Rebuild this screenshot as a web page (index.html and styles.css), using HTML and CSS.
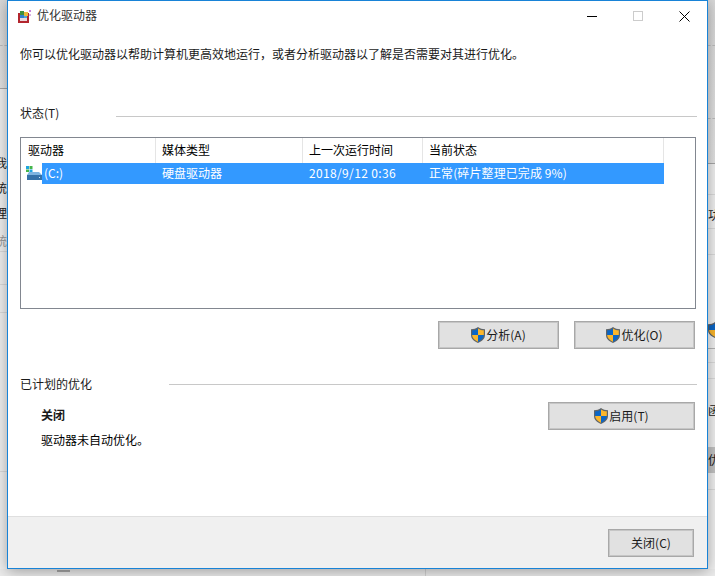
FILE: index.html
```html
<!DOCTYPE html>
<html lang="zh-CN">
<head>
    <meta charset="UTF-8">
    <title>优化驱动器</title>
    <link rel="stylesheet" href="styles.css">
</head>
<body>
    <svg class="defs" width="0" height="0">
        <symbol id="shield" viewBox="0 0 14 16">
            <path d="M7 0 C5 1.600 2.800 2.200 0 2.200 V8 C0 11.800 3 14.400 7 16 C11 14.400 14 11.800 14 8 V2.200 C11.200 2.200 9 1.600 7 0Z" fill="#5f6468"/>
            <path d="M7 1.400 C5.200 2.700 3.300 3.200 1.200 3.300 V8 H7Z" fill="#0b66c6"/>
            <path d="M7 1.400 C8.800 2.700 10.700 3.200 12.800 3.300 V8 H7Z" fill="#fbb62b"/>
            <path d="M1.200 8 C1.200 11 3.800 13.300 7 14.700 V8Z" fill="#fbb62b"/>
            <path d="M12.800 8 C12.800 11 10.200 13.300 7 14.700 V8Z" fill="#0b66c6"/>
        </symbol>
    </svg>

    <div class="desktop">
        <div class="strip strip-left">
            <div class="strip-head"><div class="dash"></div></div>
            <div class="strip-text first">我</div>
            <div class="strip-text">统</div>
            <div class="strip-text">理</div>
            <div class="strip-text muted">统</div>
            <div class="strip-line"></div>
            <div class="strip-line gap-26"></div>
            <div class="strip-line gap-28"></div>
            <div class="strip-line gap-160"></div>
        </div>

        <div class="window">
            <div class="titlebar">
                <svg class="app-icon" width="15" height="15" viewBox="0 0 15 15">
                    <rect x="1" y="4" width="11" height="10" fill="#b3262e"/>
                    <rect x="3" y="2" width="4" height="4" fill="#3f8f3c"/>
                    <rect x="7" y="3" width="4" height="4" fill="#e8b93a"/>
                    <rect x="3" y="6" width="4" height="3" fill="#2f7fd0"/>
                    <rect x="7" y="7" width="3" height="3" fill="#49a7d8"/>
                    <rect x="3" y="9" width="7" height="3" fill="#e9d8dc"/>
                    <rect x="12" y="1" width="2" height="2" fill="#c783d8"/>
                    <rect x="12" y="5" width="2" height="2" fill="#d9b4e4"/>
                </svg>
                <span class="title">优化驱动器</span>
                <div class="controls">
                    <div class="control">
                        <svg width="10" height="10" viewBox="0 0 10 10"><path d="M0 5.500H10" stroke="#000"/></svg>
                    </div>
                    <div class="control">
                        <svg width="10" height="10" viewBox="0 0 10 10"><rect x=".5" y=".5" width="9" height="9" fill="none" stroke="#ccc"/></svg>
                    </div>
                    <div class="control">
                        <svg width="11" height="11" viewBox="0 0 11 11"><path d="M.5 .5L10.500 10.500M10.500 .5L.5 10.500" stroke="#000" fill="none"/></svg>
                    </div>
                </div>
            </div>

            <div class="content">
                <p class="desc">你可以优化驱动器以帮助计算机更高效地运行，或者分析驱动器以了解是否需要对其进行优化。</p>

                <div class="section-head status-head">
                    <span class="section-title">状态(T)</span>
                    <div class="rule"></div>
                </div>

                <div class="list">
                    <div class="list-head">
                        <div class="col col-1">驱动器</div>
                        <div class="col col-2">媒体类型</div>
                        <div class="col col-3">上一次运行时间</div>
                        <div class="col col-4">当前状态</div>
                    </div>
                    <div class="list-row">
                        <svg class="drive-icon" width="16" height="14" viewBox="0 0 16 14">
                            <rect x="0" y="0" width="3" height="3" fill="#1fa5e0"/>
                            <rect x="3.500" y="0" width="3" height="3" fill="#45b649"/>
                            <rect x="0" y="3.500" width="3" height="2.500" fill="#45b649"/>
                            <rect x="3.500" y="3.500" width="3" height="2.500" fill="#1fa5e0"/>
                            <path d="M3 6 H13 L16 9 H1 Z" fill="#7db4e0"/>
                            <rect x="1" y="9" width="15" height="5" fill="#3572a8"/>
                            <rect x="13" y="11" width="1" height="1" fill="#cfe6f7"/>
                        </svg>
                        <div class="row-selected">
                            <div class="cell cell-1">(C:)</div>
                            <div class="cell cell-2">硬盘驱动器</div>
                            <div class="cell cell-3">2018/9/12 0:36</div>
                            <div class="cell cell-4">正常(碎片整理已完成 9%)</div>
                        </div>
                    </div>
                </div>

                <div class="actions">
                    <button class="btn btn-wide"><svg class="shield" width="14" height="16"><use href="#shield"/></svg>分析(A)</button>
                    <button class="btn btn-wide"><svg class="shield" width="14" height="16"><use href="#shield"/></svg>优化(O)</button>
                </div>

                <div class="section-head schedule-head">
                    <span class="section-title">已计划的优化</span>
                    <div class="rule"></div>
                </div>

                <div class="schedule">
                    <div class="schedule-info">
                        <div class="schedule-state">关闭</div>
                        <div class="schedule-note">驱动器未自动优化。</div>
                    </div>
                    <button class="btn btn-enable"><svg class="shield" width="14" height="16"><use href="#shield"/></svg>启用(T)</button>
                </div>
            </div>

            <div class="footer">
                <button class="btn btn-close">关闭(C)</button>
            </div>
        </div>

        <div class="strip strip-right">
            <div class="strip-head strip-head-tall">
                <div class="dash"></div>
                <div class="dash dash-low"></div>
            </div>
            <div class="strip-line r-line-1"></div>
            <div class="strip-text r-first">功</div>
            <div class="strip-line r-line-2"></div>
            <div class="strip-line r-line-3"></div>
            <svg class="r-shield" width="14" height="16"><use href="#shield"/></svg>
            <div class="strip-line r-line-4"></div>
            <div class="strip-line r-line-5"></div>
            <div class="strip-line r-line-6"></div>
            <div class="strip-text r-han">函</div>
            <div class="strip-text r-dark">优</div>
            <div class="strip-line r-line-7"></div>
        </div>

        <div class="strip-bottom">
            <div class="stub"></div>
            <div class="vline"></div>
        </div>
    </div>
</body>
</html>
```

FILE: styles.css
```css
* {
    margin: 0;
    padding: 0;
    box-sizing: border-box;
}

html, body {
    width: 715px;
    height: 576px;
    overflow: hidden;
}

body {
    font-family: "Noto Sans CJK SC", "Liberation Sans", sans-serif;
    font-size: 12px;
    line-height: 16px;
    color: #1a1a1a;
    background-color: #f0f0f0;
}

.defs {
    display: block;
    height: 0;
}

.desktop {
    display: grid;
    grid-template-columns: 7px 701px 7px;
    grid-template-rows: 569px 7px;
    width: 715px;
    height: 576px;
}

/* the other window showing around the dialog */
.strip {
    overflow: hidden;
    background-color: #f1f1f1;
}

.strip-head {
    height: 89px;
    padding-top: 45px;
    background: linear-gradient(#d9d9d9, #e4e4e4);
    border-bottom: 1px solid #a8a8a8;
}

.strip-head-tall {
    height: 164px;
}

.dash {
    border-top: 1px dashed #bdbdbd;
}

.dash-low {
    margin-top: 72px;
}

.strip-text {
    height: 16px;
    margin-top: 9px;
    white-space: nowrap;
    display: flex;
    color: #222;
}

.strip-left .strip-text {
    justify-content: flex-end;
}

.strip-left .first {
    margin-top: 66px;
}

.strip-left .muted {
    margin-top: 12px;
    color: #999;
}

.strip-line {
    height: 1px;
    background-color: #dcdcdc;
}

.strip-left .strip-line {
    margin-top: 2px;
}

.strip-left .gap-26 {
    margin-top: 32px;
}

.strip-left .gap-28 {
    margin-top: 27px;
}

.strip-left .gap-160 {
    margin-top: 158px;
}

.r-line-1 {
    margin-top: 30px;
}

.strip-right .r-first {
    margin-top: 12px;
}

.r-line-2 {
    margin-top: 5px;
}

.r-line-3 {
    margin-top: 25px;
}

.r-shield {
    display: block;
    margin-top: 67px;
}

.r-line-4 {
    margin-top: 10px;
    background-color: #b5b5b5;
}

.r-line-5 {
    margin-top: 13px;
}

.r-line-6 {
    margin-top: 15px;
}

.strip-right .r-han {
    margin-top: 23px;
}

.strip-right .r-dark {
    height: 26px;
    margin-top: 29px;
    padding-top: 5px;
    background-color: #c4c4c4;
}

.r-line-7 {
    margin-top: 16px;
}

.strip-bottom {
    grid-column: 1 / 4;
    display: flex;
    padding-left: 57px;
    background-color: #ececec;
}

.stub {
    width: 13px;
    height: 2px;
    margin-top: 1px;
    background-color: #a6a6a6;
}

.vline {
    width: 1px;
    margin-left: 355px;
    background-color: #d2d2d2;
}

/* dialog */
.window {
    position: relative;
    display: flex;
    flex-direction: column;
    background-color: #fff;
    border: 1px solid #1883d7;
    box-shadow: 0 2px 14px rgba(0, 0, 0, 0.35);
}

.titlebar {
    display: flex;
    align-items: center;
    height: 30px;
    padding-left: 9px;
}

.app-icon {
    display: block;
    flex: none;
}

.title {
    margin-left: 5px;
    padding-bottom: 2px;
    color: #333;
}

.controls {
    display: flex;
    margin-left: auto;
}

.control {
    display: flex;
    align-items: center;
    justify-content: center;
    width: 46px;
    height: 30px;
}

.content {
    padding: 16px 10px 0 12px;
}

.desc {
    height: 16px;
    line-height: 14px;
}

.section-head {
    display: flex;
    align-items: flex-start;
}

.status-head {
    margin-top: 43px;
}

.status-head .section-title {
    width: 96px;
    height: 16px;
    line-height: 14px;
}

.status-head .rule {
    margin-top: 10px;
}

.schedule-head {
    margin-top: 27px;
}

.schedule-head .section-title {
    width: 149px;
}

.schedule-head .rule {
    margin-top: 8px;
}

.section-title {
    flex: none;
}

.rule {
    flex: 1;
    height: 1px;
    background-color: #c8c8c8;
}

.list {
    width: 676px;
    height: 172px;
    margin-top: 15px;
    border: 1px solid #828790;
}

.list-head {
    display: flex;
    height: 25px;
    line-height: 23px;
    color: #000;
}

.col {
    padding-left: 6px;
    border-right: 1px solid #e5e5e5;
}

.col-1 {
    width: 135px;
    padding-left: 7px;
}

.col-2 {
    width: 147px;
}

.col-3 {
    width: 120px;
}

.col-4 {
    width: 241px;
}

.list-row {
    display: flex;
    height: 21px;
    line-height: 19px;
}

.drive-icon {
    display: block;
    flex: none;
    width: 16px;
    height: 14px;
    margin: 3px 0 0 5px;
}

.row-selected {
    display: flex;
    height: 21px;
    background-color: #3399ff;
    color: #fff;
}

.cell-1 {
    width: 114px;
    padding-left: 2px;
}

.cell-2 {
    width: 147px;
    padding-left: 6px;
}

.cell-3 {
    width: 120px;
    padding-left: 6px;
    letter-spacing: 0.35px;
}

.cell-4 {
    width: 241px;
    padding-left: 6px;
    letter-spacing: 0.1px;
}

.actions {
    display: flex;
    justify-content: flex-end;
    gap: 15px;
    margin-top: 12px;
    padding-right: 2px;
}

.btn {
    display: flex;
    align-items: center;
    justify-content: center;
    gap: 1px;
    height: 28px;
    font: inherit;
    color: #1a1a1a;
    background-color: #e1e1e1;
    border: 1px solid #a8a8a8;
    box-shadow: inset 0 0 0 1px #c6c6c6;
}

.btn-wide {
    width: 121px;
}

.btn-enable {
    width: 147px;
}

.btn-close {
    width: 86px;
}

.shield {
    display: block;
    flex: none;
}

.schedule {
    display: flex;
    justify-content: space-between;
    align-items: flex-start;
    margin-top: 10px;
    padding: 0 2px 0 21px;
}

.schedule-info {
    padding-top: 5px;
}

.schedule-state {
    font-weight: 700;
}

.schedule-note {
    margin-top: 9px;
    color: #000;
}

.footer {
    display: flex;
    justify-content: flex-end;
    height: 52px;
    margin-top: auto;
    padding: 12px 13px 0 0;
    background-color: #f0f0f0;
    border-top: 1px solid #dfdfdf;
}
```
